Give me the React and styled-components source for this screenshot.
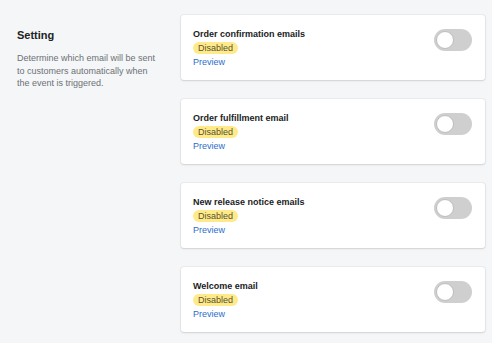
import React from 'react';
import styled, { createGlobalStyle } from 'styled-components';

const GlobalStyle = createGlobalStyle`
  html, body {
    margin: 0;
    padding: 0;
    background: #f4f6f8;
    font-family: "Liberation Sans", Arial, sans-serif;
  }
`;

const notifications = [
  'Order confirmation emails',
  'Order fulfillment email',
  'New release notice emails',
  'Welcome email',
];

function App() {
  return (
    <>
      <GlobalStyle />
      <Page>
        <Intro>
          <h2>Setting</h2>
          <p>Determine which email will be sent to customers automatically when the event is triggered.</p>
        </Intro>
        <List>
          {notifications.map((name) => (
            <Card key={name}>
              <Info>
                <Title>{name}</Title>
                <Badge>Disabled</Badge>
                <Link href="#">Preview</Link>
              </Info>
              <Toggle />
            </Card>
          ))}
        </List>
      </Page>
    </>
  );
}

const Page = styled.div`
  display: grid;
  grid-template-columns: 164px 304px;
  padding: 15px 7px 0 17px;
  min-height: 343px;
  box-sizing: border-box;
`;

const Intro = styled.div`
  padding-top: 14px;
  h2 {
    margin: 0 0 11px;
    font-size: 11px;
    font-weight: 700;
    color: #202223;
  }
  p {
    margin: 0;
    font-size: 9px;
    line-height: 12.5px;
    color: #6d7175;
    width: 142px;
  }
`;

const List = styled.div`
  display: flex;
  flex-direction: column;
  gap: 19px;
`;

const Card = styled.div`
  height: 65px;
  background: #fff;
  border-radius: 3px;
  box-shadow: 0 0 0 1px rgba(63, 63, 68, 0.05), 0 1px 2px rgba(63, 63, 68, 0.15);
  display: flex;
  align-items: flex-start;
  justify-content: space-between;
  padding: 13px 13px 0 12px;
  box-sizing: border-box;
`;

const Info = styled.div`
  display: flex;
  flex-direction: column;
  align-items: flex-start;
`;

const Title = styled.div`
  font-size: 9px;
  font-weight: 700;
  color: #202223;
  line-height: 12px;
`;

const Badge = styled.span`
  margin-top: 2px;
  background: #ffea8a;
  color: #595130;
  font-size: 9px;
  line-height: 12px;
  padding: 0 5px;
  border-radius: 6px;
`;

const Link = styled.a`
  margin-top: 2px;
  font-size: 9px;
  line-height: 12px;
  color: #2c6ecb;
  text-decoration: none;
`;

const Toggle = styled.span`
  margin-top: 1px;
  position: relative;
  width: 38px;
  height: 22px;
  border-radius: 11px;
  background: #cfcfcf;
  &::after {
    content: "";
    position: absolute;
    left: 2px;
    top: 2px;
    width: 16px;
    height: 16px;
    border-radius: 50%;
    background: #fff;
    border: 1px solid #bdbdbd;
  }
`;

export default App;
